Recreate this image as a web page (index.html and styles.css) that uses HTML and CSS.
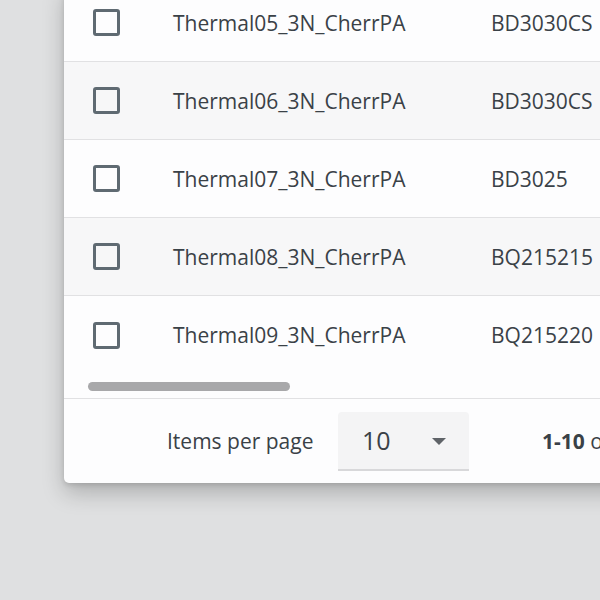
FILE: index.html
```html
<!DOCTYPE html>
<html>
<head>
<meta charset="utf-8">
<link rel="stylesheet" href="styles.css">
</head>
<body>
<div class="stage">
  <div class="card">
    <div class="rows">
      <div class="row">
        <div class="cell-check"><span class="checkbox"></span></div>
        <div class="cell-name">Thermal05_3N_CherrPA</div>
        <div class="cell-code">BD3030CS</div>
      </div>
      <div class="row alt">
        <div class="cell-check"><span class="checkbox"></span></div>
        <div class="cell-name">Thermal06_3N_CherrPA</div>
        <div class="cell-code">BD3030CS</div>
      </div>
      <div class="row">
        <div class="cell-check"><span class="checkbox"></span></div>
        <div class="cell-name">Thermal07_3N_CherrPA</div>
        <div class="cell-code">BD3025</div>
      </div>
      <div class="row alt">
        <div class="cell-check"><span class="checkbox"></span></div>
        <div class="cell-name">Thermal08_3N_CherrPA</div>
        <div class="cell-code">BQ215215</div>
      </div>
      <div class="row last">
        <div class="cell-check"><span class="checkbox"></span></div>
        <div class="cell-name">Thermal09_3N_CherrPA</div>
        <div class="cell-code">BQ215220</div>
      </div>
      <div class="scrollbar"><span class="thumb"></span></div>
    </div>
    <div class="footer">
      <span class="ipp-label">Items per page</span>
      <div class="select">
        <span class="select-value">10</span>
        <span class="select-arrow"></span>
      </div>
      <span class="range"><b>1-10</b> of 24</span>
    </div>
  </div>
</div>
</body>
</html>
```
FILE: styles.css
```css
html, body {
  margin: 0;
  padding: 0;
  background: #dfe0e1;
  overflow: hidden;
}
body {
  width: 600px;
  height: 600px;
  font-family: "Open Sans", "Noto Sans", sans-serif;
  color: #3a4147;
}
.stage {
  padding-left: 64px;
  height: 600px;
  overflow: hidden;
}
.card {
  width: 700px;
  margin-top: -16px;
  background: #fdfdfe;
  border-radius: 5px;
  box-shadow: 0 10px 22px rgba(0, 0, 0, 0.22), 0 2px 5px rgba(0, 0, 0, 0.12);
}
.row {
  display: flex;
  align-items: center;
  height: 77px;
  border-bottom: 1px solid #e1e1e3;
  font-size: 21px;
  background: #fdfdfe;
}
.row.alt {
  background: #f7f7f8;
}
.row.last {
  border-bottom: none;
  height: 78px;
}
.cell-check {
  width: 109px;
  padding-left: 29px;
  box-sizing: border-box;
  display: flex;
  align-items: center;
}
.checkbox {
  display: block;
  width: 21px;
  height: 21px;
  border: 3px solid #5f6a72;
  border-radius: 3px;
}
.cell-name {
  width: 318px;
}
.cell-code {
  flex: 1;
}
.scrollbar {
  padding: 8px 0 0 24px;
  box-sizing: border-box;
  border-bottom: 1px solid #e1e1e3;
  height: 25px;
}
.thumb {
  display: block;
  width: 202px;
  height: 9px;
  border-radius: 5px;
  background: #a8a8aa;
}
.footer {
  display: flex;
  align-items: center;
  height: 84px;
  padding-left: 103px;
  font-size: 21px;
}
.ipp-label {
  width: 171px;
}
.select {
  position: relative;
  width: 131px;
  height: 57px;
  background: #f4f4f5;
  border-radius: 4px 4px 0 0;
  border-bottom: 2px solid #d8d8da;
  display: flex;
  align-items: center;
}
.select-value {
  padding-left: 24px;
  font-size: 25px;
}
.select-arrow {
  position: absolute;
  left: 94px;
  top: 26px;
  width: 0;
  height: 0;
  border-left: 7.5px solid transparent;
  border-right: 7.5px solid transparent;
  border-top: 7px solid #5f6368;
}
.range {
  margin-left: 73px;
}
.range b {
  font-weight: 700;
}
```
